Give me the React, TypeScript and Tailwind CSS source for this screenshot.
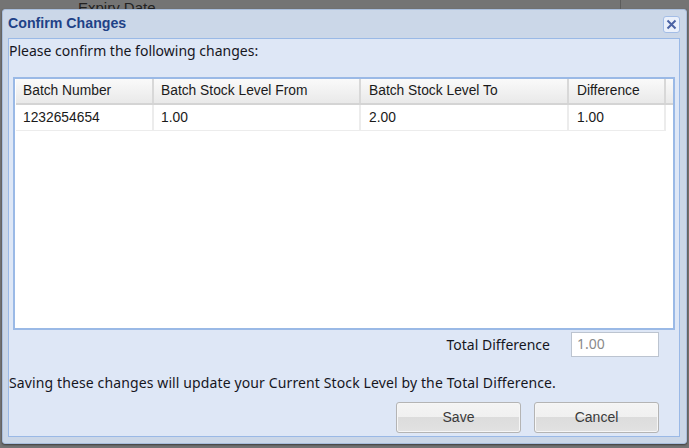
const cellText = "font-['Liberation_Sans',Arial,sans-serif] text-[13.8px] text-[#1a1a1a]"
const bodyText = "font-['Noto_Sans',Tahoma,sans-serif] text-[14px] leading-[18px] text-[#16161e]"

const columns = [
  { label: 'Batch Number', value: '1232654654', width: 'w-[138px]', pad: 'pl-[7px]' },
  { label: 'Batch Stock Level From', value: '1.00', width: 'w-[207px]', pad: 'pl-[7px]' },
  { label: 'Batch Stock Level To', value: '2.00', width: 'w-[208px]', pad: 'pl-[8px]' },
  { label: 'Difference', value: '1.00', width: 'w-[97px]', pad: 'pl-[8px]' },
]

function DialogButton({ label }: { label: string }) {
  return (
    <button className="w-[125px] h-[31px] rounded-[3px] border border-[#b4b4b4] shadow-[inset_0_0_0_1px_#f6f6f6] bg-[linear-gradient(#f4f4f4_0%,#f0f0f0_50%,#dcdcdc_50%,#e2e2e2_100%)] font-['Liberation_Sans',Arial,sans-serif] text-[14px] text-[#3a3a3a]">
      {label}
    </button>
  )
}

export default function App() {
  return (
    <div className="relative w-[689px] h-[448px] overflow-hidden bg-[#747474]">
      {/* page behind the dialog */}
      <div className="h-[9px] overflow-hidden flex">
        <div className="w-[621px] border-r border-[#5c5c5c] pl-[78px] font-['Liberation_Sans',Arial,sans-serif] text-[15px] leading-[16px] text-[#222]">
          Expiry Date
        </div>
      </div>

      <div className="ml-[2px] w-[685px] h-[435px] rounded-[3px] border border-[#a9bedd] bg-[#cbd7e8] pl-[5px] pr-[6px] flex flex-col shadow-[0_1px_2px_#3c3c3c]">
        <div className="h-[28px] flex items-center justify-between shrink-0">
          <span className="font-['Liberation_Sans',Arial,sans-serif] font-bold text-[14.2px] text-[#1f4287]">Confirm Changes</span>
          <button className="w-[17px] h-[17px] rounded-[3px] border border-[#a3bde6] bg-[#eaf0fb] flex items-center justify-center">
            <svg width="11" height="11" viewBox="0 0 11 11">
              <path d="M1.5 1.5 L9.5 9.5 M9.5 1.5 L1.5 9.5" stroke="#4a62a4" strokeWidth="2" />
            </svg>
          </button>
        </div>

        <div className="h-[399px] border border-[#9ab9e6] bg-[#dee7f6] flex flex-col">
          <p className={`${bodyText} pt-[3px] h-[38px] shrink-0`}>Please confirm the following changes:</p>

          <div className="mx-[4px] h-[253px] shrink-0 border border-[#9ab9e6] p-[1px] bg-white shadow-[inset_0_0_0_1px_#9ab9e6]">
            <div className="h-full bg-white pl-[1px]">
              <div className="flex h-[26px] border-b-2 border-[#d4d4d4] bg-[linear-gradient(#fafafa,#e9e9e9)]">
                {columns.map((col) => (
                  <div key={col.label} className={`${col.width} ${col.pad} ${cellText} border-r-2 border-[#d8d8d8] leading-[24px] shrink-0`}>
                    {col.label}
                  </div>
                ))}
              </div>
              <div className="flex h-[26px] w-[650px] border-b border-[#ececec]">
                {columns.map((col) => (
                  <div key={col.label} className={`${col.width} ${col.pad} ${cellText} border-r-2 border-[#ececec] leading-[25px] shrink-0`}>
                    {col.value}
                  </div>
                ))}
              </div>
            </div>
          </div>

          <div className="flex justify-end items-center h-[29px] pr-[20px] shrink-0">
            <span className={`${bodyText} mr-[21px] mt-[1px]`}>Total Difference</span>
            <input
              readOnly
              value="1.00"
              className="w-[88px] h-[25px] border border-[#bcc4d0] bg-white pl-[5px] pb-[2px] font-['Noto_Sans',Tahoma,sans-serif] text-[14px] text-[#8a8a8a]"
            />
          </div>

          <p className={`${bodyText} pt-[15px] h-[43px] shrink-0 tracking-[0.12px]`}>
            Saving these changes will update your Current Stock Level by the Total Difference.
          </p>

          <div className="flex justify-end gap-[13px] pr-[20px]">
            <DialogButton label="Save" />
            <DialogButton label="Cancel" />
          </div>
        </div>
      </div>
    </div>
  )
}
